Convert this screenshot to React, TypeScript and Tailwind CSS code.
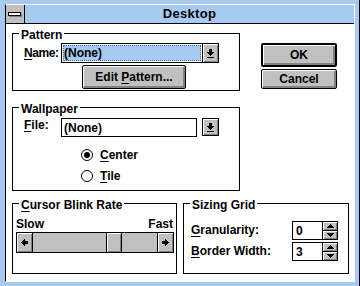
import React from 'react';

const U = ({ c }: { c: string }) => (
  <span className="underline decoration-1 underline-offset-2">{c}</span>
);

function GroupBox({
  label,
  className,
  children,
}: {
  label: React.ReactNode;
  className: string;
  children?: React.ReactNode;
}) {
  return (
    <div className={`relative border border-black ${className}`}>
      <span className="absolute left-[6px] top-[-6px] bg-white px-[2px] leading-[14px] whitespace-nowrap">
        {label}
      </span>
      {children}
    </div>
  );
}

const face =
  'bg-[#c0c0c0] shadow-[inset_1px_1px_0_#ffffff,inset_-1px_-1px_0_#808080]';

function ComboArrow() {
  return (
    <svg width="7" height="9" viewBox="0 0 7 9" shapeRendering="crispEdges">
      <path d="M2 0h3v3h2v1h-1v1h-1v1h-1v1h-1v-1h-1v-1h-1v-1h-1v-1h2z" fill="#000" />
      <rect x="0" y="8" width="7" height="1" fill="#000" />
    </svg>
  );
}

function LeftArrow() {
  return (
    <svg width="7" height="7" viewBox="0 0 7 7" shapeRendering="crispEdges">
      <path d="M0 3h1v-1h1v-1h1v-1h1v2h3v3h-3v2h-1v-1h-1v-1h-1v-1h-1z" fill="#000" />
    </svg>
  );
}

function RightArrow() {
  return (
    <svg width="7" height="7" viewBox="0 0 7 7" shapeRendering="crispEdges">
      <path d="M7 3h-1v-1h-1v-1h-1v-1h-1v2h-3v3h3v2h1v-1h1v-1h1v-1h1z" fill="#000" />
    </svg>
  );
}

function UpTri() {
  return (
    <svg width="7" height="4" viewBox="0 0 7 4" shapeRendering="crispEdges">
      <path d="M3 0h1v1h1v1h1v1h1v1h-7v-1h1v-1h1v-1h1z" fill="#000" />
    </svg>
  );
}

function DownTri() {
  return (
    <svg width="7" height="4" viewBox="0 0 7 4" shapeRendering="crispEdges">
      <path d="M0 0h7v1h-1v1h-1v1h-1v1h-1v-1h-1v-1h-1v-1h-1z" fill="#000" />
    </svg>
  );
}

function Radio({ checked }: { checked?: boolean }) {
  return (
    <span className="w-[12px] h-[12px] rounded-full border border-black bg-white flex items-center justify-center shrink-0">
      {checked && <span className="w-[6px] h-[6px] rounded-full bg-black" />}
    </span>
  );
}

function Spin({ value }: { value: string }) {
  return (
    <div className="flex h-[19px]">
      <div className="w-[31px] h-[19px] border border-black pl-[3px] flex items-center bg-white">
        {value}
      </div>
      <div className="w-[15px] h-[19px] border-y border-r border-black flex flex-col">
        <div className={`h-[8px] flex items-center justify-center ${face}`}>
          <UpTri />
        </div>
        <div className="h-[1px] bg-black" />
        <div className={`h-[8px] flex items-center justify-center ${face}`}>
          <DownTri />
        </div>
      </div>
    </div>
  );
}

export default function App() {
  return (
    <div className="w-[360px] h-[286px] bg-[#a6caf0] border-r border-black pt-[4px] pl-[5px] pr-[4px] pb-[4px] font-['Liberation_Sans',Arial,sans-serif] font-bold text-[12px] leading-[14px] text-black">
      <div className="h-full flex flex-col border border-t-white border-r-white border-b-white border-l-black">
        {/* Title bar */}
        <div className="h-[19px] flex border-b border-black bg-[#a6caf0] shrink-0">
          <div className="w-[19px] h-[18px] bg-[#c0c0c0] border-r border-black flex items-center pl-[2px]">
            <div className="w-[13px] h-[4px] border border-black bg-white shadow-[1px_1px_0_#808080]" />
          </div>
          <div className="flex-1 text-center text-[13px] leading-[18px] tracking-[0.3px]">Desktop</div>
        </div>

        {/* Client */}
        <div className="flex-1 bg-white pl-[6px] pt-[9px] flex flex-col">
          {/* Row 1 */}
          <div className="flex items-start">
            <GroupBox label="Pattern" className="w-[228px] h-[58px]">
              <div className="mt-[9px] pl-[11px] flex items-center">
                <span className="w-[37px] tracking-[-0.4px]">
                  <U c="N" />ame:
                </span>
                <div className="w-[158px] h-[20px] border border-black flex">
                  <div className="w-[140px] p-[1px]">
                    <div className="h-full bg-[#a6caf0] border border-dotted border-[#4f6f96] flex items-center">
                      (None)
                    </div>
                  </div>
                  <div className="w-[16px] border-l border-black">
                    <div className={`h-full flex items-center justify-center ${face}`}>
                      <ComboArrow />
                    </div>
                  </div>
                </div>
              </div>
              <div className="ml-[69px] mt-[2px] w-[104px] h-[24px] border border-black rounded-[2px] bg-[#c0c0c0] shadow-[inset_1px_1px_0_#ffffff,inset_-2px_-2px_0_#808080] flex items-center justify-center">
                <span>
                  Edit <U c="P" />attern...
                </span>
              </div>
            </GroupBox>

            <div className="ml-[21px] mt-[10px] flex flex-col">
              <div className="w-[76px] h-[24px] border-2 border-black rounded-[2px] bg-[#c0c0c0] shadow-[inset_1px_1px_0_#ffffff,inset_-2px_-2px_0_#808080] flex items-center justify-center">
                OK
              </div>
              <div className="mt-[2px] w-[76px] h-[20px] border border-black rounded-[2px] bg-[#c0c0c0] shadow-[inset_1px_1px_0_#ffffff,inset_-2px_-2px_0_#808080] flex items-center justify-center">
                Cancel
              </div>
            </div>
          </div>

          {/* Row 2 */}
          <GroupBox label="Wallpaper" className="mt-[16px] w-[228px] h-[84px]">
            <div className="mt-[10px] pl-[11px] flex items-start">
              <span className="w-[37px]">
                <U c="F" />ile:
              </span>
              <div className="w-[136px] h-[19px] border border-black pl-[2px] flex items-center">(None)</div>
              <div className="ml-[5px] w-[17px] h-[18px] border border-black">
                <div className={`h-full flex items-center justify-center ${face}`}>
                  <ComboArrow />
                </div>
              </div>
            </div>
            <div className="mt-[11px] ml-[68px] flex items-center gap-[7px] h-[14px]">
              <Radio checked />
              <span>
                <U c="C" />enter
              </span>
            </div>
            <div className="mt-[7px] ml-[68px] flex items-center gap-[7px] h-[14px]">
              <Radio />
              <span>
                <U c="T" />ile
              </span>
            </div>
          </GroupBox>

          {/* Row 3 */}
          <div className="mt-[12px] flex gap-[6px]">
            <GroupBox
              label={
                <span>
                  <U c="C" />ursor Blink Rate
                </span>
              }
              className="w-[165px] h-[71px]"
            >
              <div className="mt-[13px] px-[3px] flex justify-between">
                <span>Slow</span>
                <span>Fast</span>
              </div>
              <div className="mt-[1px] ml-[3px] w-[158px] h-[21px] border border-black flex">
                <div className="w-[16px] border-r border-black">
                  <div className={`h-full flex items-center justify-center ${face}`}>
                    <LeftArrow />
                  </div>
                </div>
                <div className="flex-1 flex bg-[#c0c0c0]">
                  <div className="w-[73px]" />
                  <div className="w-[16px] border-x border-black">
                    <div className={`h-full ${face}`} />
                  </div>
                  <div className="flex-1" />
                </div>
                <div className="w-[16px] border-l border-black">
                  <div className={`h-full flex items-center justify-center ${face}`}>
                    <RightArrow />
                  </div>
                </div>
              </div>
            </GroupBox>

            <GroupBox label="Sizing Grid" className="w-[166px] h-[71px]">
              <div className="mt-[17px] pl-[7px] flex items-center">
                <span className="w-[101px] -mt-[2px]">
                  <U c="G" />ranularity:
                </span>
                <Spin value="0" />
              </div>
              <div className="mt-[2px] pl-[7px] flex items-center">
                <span className="w-[101px] -mt-[2px]">
                  <U c="B" />order Width:
                </span>
                <Spin value="3" />
              </div>
            </GroupBox>
          </div>
        </div>
      </div>
    </div>
  );
}
